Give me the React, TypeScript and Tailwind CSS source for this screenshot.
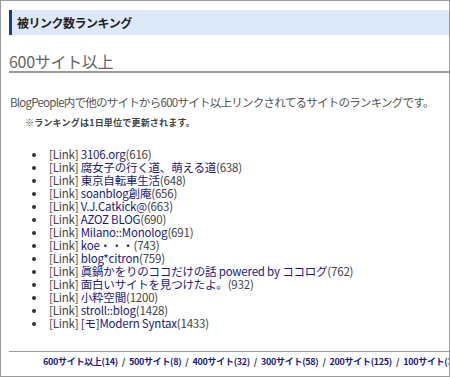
const sites = [
  { name: '3106.org', count: 616 },
  { name: '腐女子の行く道、萌える道', count: 638 },
  { name: '東京自転車生活', count: 648 },
  { name: 'soanblog創庵', count: 656 },
  { name: 'V.J.Catkick@', count: 663 },
  { name: 'AZOZ BLOG', count: 690 },
  { name: 'Milano::Monolog', count: 691 },
  { name: 'koe・・・', count: 743 },
  { name: 'blog*citron', count: 759 },
  { name: '眞鍋かをりのココだけの話 powered by ココログ', count: 762 },
  { name: '面白いサイトを見つけたよ。', count: 932 },
  { name: '小粋空間', count: 1200 },
  { name: 'stroll::blog', count: 1428 },
  { name: '[モ]Modern Syntax', count: 1433 },
]

const pages = [
  '600サイト以上(14)',
  '500サイト(8)',
  '400サイト(32)',
  '300サイト(58)',
  '200サイト(125)',
  '100サイト(312)',
]

export default function App() {
  return (
    <div
      className="w-[450px] h-[377px] overflow-hidden border border-[#9a9a9a] bg-white pl-2 pt-[9px]"
      style={{ fontFamily: '"Noto Sans CJK JP", "Noto Sans", sans-serif' }}
    >
      <div className="h-[25px] flex items-center bg-[#dde9f8] border-l-[3px] border-[#1b3a8c] pl-[5px]">
        <h2 className="text-[12px] font-bold text-[#222] tracking-[-0.5px]">被リンク数ランキング</h2>
      </div>

      <h1 className="mt-[16px] h-[22px] border-b-2 border-[#999] text-[16px] leading-[20px] text-[#666] tracking-[-0.3px]">
        600サイト以上
      </h1>

      <p className="mt-[22px] pl-[1px] text-[11.5px] leading-[14px] text-[#555] tracking-[-0.75px]">
        BlogPeople内で他のサイトから600サイト以上リンクされてるサイトのランキングです。
      </p>
      <p className="mt-[8px] pl-[16px] text-[9px] leading-[12px] font-bold text-[#444] tracking-[0.2px]">
        ※ランキングは1日単位で更新されます。
      </p>

      <ul className="mt-[19px] pl-[38px] list-disc marker:text-[#333] text-[11.5px] leading-[13px] tracking-[-0.2px]">
        {sites.map(s => (
          <li key={s.name} className="pl-[2px] whitespace-nowrap">
            <span className="text-[#444]">[Link]</span>{' '}
            <a href="#" className="text-[#1a1a80]">{s.name}</a>
            <span className="text-[#444]">({s.count})</span>
          </li>
        ))}
      </ul>

      <div className="mt-[21px] border-t border-[#999] pt-[4px] pl-[34px] whitespace-nowrap text-[9px] leading-[12px] font-bold text-[#1a1a80] tracking-[-0.3px]">
        {pages.map((p, i) => (
          <span key={p}>
            {i > 0 && <span className="text-[#333] px-[4px]">/</span>}
            <a href="#">{p}</a>
          </span>
        ))}
      </div>
    </div>
  )
}
